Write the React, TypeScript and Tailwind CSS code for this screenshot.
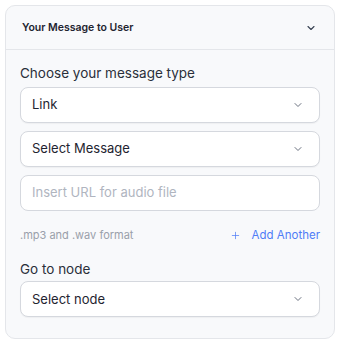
import { ChevronDown, Plus } from "lucide-react";

function SelectBox({ label }: { label: string }) {
  return (
    <div className="flex h-[36px] items-center justify-between rounded-[8px] border border-[#d5d8de] bg-white pl-[11px] pr-[15px] shadow-[0_1px_1px_rgba(0,0,0,0.04)]">
      <span className="text-[13px] text-[#1f2430]">{label}</span>
      <ChevronDown className="h-[12px] w-[12px] text-[#6b7280]" strokeWidth={2} />
    </div>
  );
}

export default function App() {
  return (
    <div className="min-h-screen w-full bg-white p-[5px] font-['Inter',sans-serif]">
      <div className="w-[330px] rounded-[10px] border border-[#e4e6ea] bg-[#f8f9fb]">
        <div className="flex h-[44px] items-center justify-between border-b border-[#e4e6ea] pl-[16px] pr-[17px]">
          <span className="text-[10.5px] font-semibold text-[#1f2430]">Your Message to User</span>
          <ChevronDown className="h-[12px] w-[12px] text-[#374151]" strokeWidth={2.2} />
        </div>
        <div className="flex flex-col px-[14px] pt-[14px] pb-[21px]">
          <label className="mb-[5px] text-[13.5px] leading-[18px] text-[#2a2f3a]">Choose your message type</label>
          <div className="flex flex-col gap-[8px]">
            <SelectBox label="Link" />
            <SelectBox label="Select Message" />
            <div className="flex h-[36px] items-center rounded-[8px] border border-[#d5d8de] bg-white px-[11px]">
              <input
                className="w-full bg-transparent text-[13px] text-[#1f2430] outline-none placeholder:text-[#b0b5bf]"
                placeholder="Insert URL for audio file"
              />
            </div>
          </div>
          <div className="mt-[16px] flex items-center justify-between">
            <span className="text-[11px] text-[#9aa0aa]">.mp3 and .wav format</span>
            <button className="flex items-center gap-[11px] text-[11.5px] text-[#4f7cf7]">
              <Plus className="h-[11px] w-[11px]" strokeWidth={1.6} />
              Add Another
            </button>
          </div>
          <label className="mt-[16px] mb-[3px] text-[13.5px] leading-[18px] text-[#2a2f3a]">Go to node</label>
          <SelectBox label="Select node" />
        </div>
      </div>
    </div>
  );
}
